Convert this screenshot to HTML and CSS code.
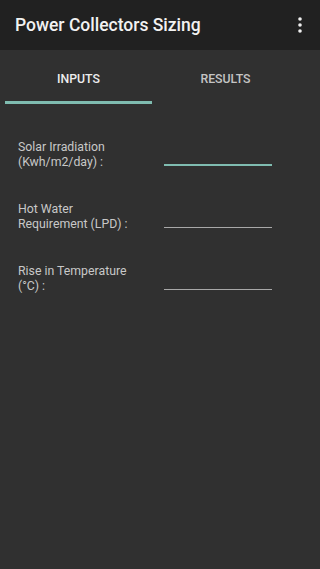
FILE: index.html
```html
<!DOCTYPE html>
<html>
<head>
<meta charset="utf-8">
<link rel="stylesheet" href="styles.css">
</head>
<body>
<div class="app">
  <header class="toolbar">
    <div class="title">Power Collectors Sizing</div>
    <div class="menu"><svg width="4" height="16" viewBox="0 0 4 16"><circle cx="2" cy="2" r="1.8" fill="#f0f0f0"/><circle cx="2" cy="8" r="1.8" fill="#f0f0f0"/><circle cx="2" cy="14" r="1.8" fill="#f0f0f0"/></svg></div>
  </header>
  <nav class="tabs">
    <div class="tab active"><span>INPUTS</span></div>
    <div class="tab"><span>RESULTS</span></div>
  </nav>
  <main class="form">
    <div class="row">
      <div class="label">Solar Irradiation<br>(Kwh/m2/day) :</div>
      <div class="field focused"></div>
    </div>
    <div class="row">
      <div class="label">Hot Water<br>Requirement (LPD) :</div>
      <div class="field"></div>
    </div>
    <div class="row">
      <div class="label">Rise in Temperature<br>(°C) :</div>
      <div class="field"></div>
    </div>
  </main>
</div>
</body>
</html>
```
FILE: styles.css
```css
* { box-sizing: border-box; }
html, body { margin: 0; padding: 0; }
body {
  width: 320px;
  height: 569px;
  background: #303030;
  font-family: Roboto, "Liberation Sans", sans-serif;
  overflow: hidden;
}
.app { display: flex; flex-direction: column; height: 569px; }
.toolbar {
  height: 50px;
  background: #212121;
  display: flex;
  align-items: center;
  justify-content: space-between;
  padding: 0 18px 0 15px;
}
.title {
  color: #f2f2f2;
  font-size: 17.5px;
  font-weight: 500;
}
.menu { display: flex; align-items: center; }
.tabs {
  display: flex;
  height: 54px;
  width: 299px;
  padding-left: 5px;
}
.tab {
  flex: 1;
  display: flex;
  align-items: center;
  justify-content: center;
  color: #c4c4c4;
  font-size: 12.3px;
  font-weight: 500;
  padding-top: 6px;
  border-bottom: 3px solid transparent;
}
.tab.active {
  color: #ececec;
  border-bottom-color: #7fbcb0;
}
.form {
  padding: 36px 0 0 18px;
  display: flex;
  flex-direction: column;
  gap: 33px;
}
.row {
  display: flex;
  align-items: flex-end;
  height: 29px;
}
.label {
  width: 146px;
  color: #c8c8c8;
  font-size: 12.3px;
  line-height: 14.5px;
}
.field {
  width: 108px;
  height: 1px;
  background: #a8a8a8;
  margin-bottom: 3px;
}
.field.focused {
  height: 2px;
  background: #7fbcb0;
}
```
